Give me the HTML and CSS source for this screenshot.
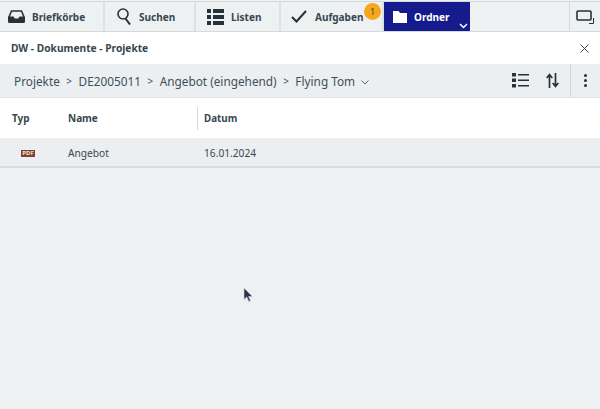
FILE: index.html
```html
<!doctype html>
<html lang="en">
<head>
  <meta charset="utf-8">
  <title>DW - Dokumente - Projekte</title>
  <link rel="stylesheet" href="styles.css">
</head>
<body>
  <!-- TOP TOOLBAR -->
  <nav class="toolbar">
    <div class="tab tab-briefkoerbe">
      <svg class="icon" width="17" height="13" viewBox="0 0 17 13"><path d="M1 7L3.500 1H13.500L16 7" fill="none" stroke="#263238" stroke-width="1.600"/><path d="M0 6.500H5.500L6.800 8.500H10.200L11.500 6.500H17V11.500Q17 13 15.500 13H1.500Q0 13 0 11.500Z" fill="#263238"/></svg>
      <span>Briefkörbe</span>
    </div>
    <div class="tab tab-suchen">
      <svg class="icon" width="14" height="17" viewBox="0 0 14 17"><circle cx="6" cy="6" r="5" fill="none" stroke="#263238" stroke-width="1.600"/><path d="M8.500 10.500L13 16.500" stroke="#263238" stroke-width="2"/></svg>
      <span>Suchen</span>
    </div>
    <div class="tab tab-listen">
      <svg class="icon" width="17" height="16" viewBox="0 0 17 16" fill="#263238"><rect width="4" height="4"/><rect x="6" width="11" height="4"/><rect y="6" width="4" height="4"/><rect x="6" y="6" width="11" height="4"/><rect y="12" width="4" height="4"/><rect x="6" y="12" width="11" height="4"/></svg>
      <span>Listen</span>
    </div>
    <div class="tab tab-aufgaben">
      <svg class="icon" width="16" height="13" viewBox="0 0 16 13"><path d="M1 7L5.500 11.500L15 1" fill="none" stroke="#263238" stroke-width="2"/></svg>
      <span>Aufgaben</span>
      <b class="badge">1</b>
    </div>
    <div class="tab tab-ordner">
      <svg class="icon" width="14" height="12" viewBox="0 0 14 12"><path d="M0 0H5.500L7 2H14V12H0Z" fill="#fff"/></svg>
      <span>Ordner</span>
      <svg class="tab-caret" width="9" height="6" viewBox="0 0 9 6"><path d="M1 1L4.500 4.500L8 1" fill="none" stroke="#fff" stroke-width="1.500"/></svg>
    </div>
    <div class="toolbar-fill"></div>
    <div class="tab tab-window">
      <svg width="18" height="14" viewBox="0 0 18 14" fill="none" stroke="#263238"><rect x="1" y="1" width="14" height="9" rx="1" stroke-width="1.600"/><path d="M17.500 8V13.500H13" stroke-width="1"/></svg>
    </div>
  </nav>

  <!-- TITLE -->
  <header class="title-bar">
    <h1>DW - Dokumente - Projekte</h1>
    <svg width="9" height="9" viewBox="0 0 9 9"><path d="M.5 .5L8.500 8.500M8.500 .5L.5 8.500" stroke="#37474f" stroke-width="1"/></svg>
  </header>

  <!-- BREADCRUMB -->
  <div class="crumb-bar">
    <div class="crumbs">
      <span>Projekte</span><i>&gt;</i>
      <span>DE2005011</span><i>&gt;</i>
      <span>Angebot (eingehend)</span><i>&gt;</i>
      <span>Flying Tom</span>
      <svg width="8" height="5" viewBox="0 0 8 5"><path d="M.5 .5L4 4L7.500 .5" fill="none" stroke="#546e7a" stroke-width="1"/></svg>
    </div>
    <svg class="crumb-list" width="17" height="15" viewBox="0 0 17 15" fill="#263238"><rect y="0" width="4" height="3.500"/><rect x="6" y="1" width="11" height="1.500"/><rect y="5.500" width="4" height="3.500"/><rect x="6" y="6.500" width="11" height="1.500"/><rect y="11" width="4" height="3.500"/><rect x="6" y="12" width="11" height="1.500"/></svg>
    <svg class="crumb-sort" width="13" height="15" viewBox="0 0 13 15" fill="none" stroke="#263238" stroke-width="1.700"><path d="M3.500 15V2M.7 5L3.500 1.500L6.300 5M9.500 0V13M6.700 10L9.500 13.500L12.300 10"/></svg>
    <div class="crumb-more"><b></b><b></b><b></b></div>
  </div>

  <!-- TABLE -->
  <div class="list-head">
    <div class="col-typ">Typ</div>
    <div class="col-name">Name</div>
    <div class="col-datum">Datum</div>
  </div>
  <div class="list-row">
    <div class="col-typ"><span class="pdf">PDF</span></div>
    <div class="col-name">Angebot</div>
    <div class="col-datum">16.01.2024</div>
  </div>

  <!-- mouse pointer in the screenshot -->
  <svg class="cursor" width="11" height="16" viewBox="0 0 11 16"><path d="M1 1V12.500L3.700 10L5.800 14.500L7.500 13.700L5.600 9.500H9.500Z" fill="#37324a" stroke="#cfd3d6" stroke-width=".6"/></svg>
</body>
</html>
```

FILE: styles.css
```css
/* Basic reset */
html, body {
  margin: 0;
  padding: 0;
}

body {
  width: 600px;
  height: 409px;
  overflow: hidden;
  position: relative;
  background: #eef1f2;
  color: #37474f;
  font-family: "Noto Sans", sans-serif;
  font-size: 10px;
}

/* Toolbar */
.toolbar {
  display: flex;
  height: 29px;
  margin-top: 1px;
  border-top: 1px solid #d5d9db;
  border-bottom: 1px solid #d5d9db;
  background: #eef1f2;
}

.tab {
  display: flex;
  align-items: center;
  position: relative;
  box-sizing: border-box;
  border-right: 2px solid #dde1e3;
  font-weight: 700;
  color: #37474f;
}

.tab-briefkoerbe { width: 105px; padding-left: 8px; gap: 7px; }
.tab-suchen { width: 91px; padding-left: 12px; gap: 8px; }
.tab-listen { width: 85px; padding-left: 11px; gap: 7px; }
.tab-aufgaben { width: 103px; padding-left: 10px; gap: 8px; }

.tab-ordner {
  width: 86px;
  padding-left: 9px;
  gap: 7px;
  background: #151b8d;
  color: #fff;
  border-right: 0;
}

.tab-caret {
  position: absolute;
  right: 2px;
  bottom: 2px;
}

.toolbar-fill {
  flex: 1;
}

.tab-window {
  width: 31px;
  padding-left: 6px;
  border-right: 0;
  border-left: 1px solid #d5d9db;
}

.badge {
  position: absolute;
  top: 1px;
  right: 1px;
  width: 17px;
  height: 17px;
  border-radius: 50%;
  background: #f5a81c;
  color: #5d4312;
  font-size: 9px;
  font-weight: 400;
  line-height: 17px;
  text-align: center;
}

/* Title bar */
.title-bar {
  display: flex;
  align-items: center;
  justify-content: space-between;
  height: 32px;
  padding: 0 11px;
  background: #fff;
}

.title-bar h1 {
  margin: 0;
  font-size: 10.200px;
  font-weight: 700;
}

/* Breadcrumb bar */
.crumb-bar {
  display: flex;
  align-items: center;
  height: 33px;
  border-bottom: 1px solid #dfe3e5;
  background: #eceff1;
}

.crumbs {
  display: flex;
  align-items: center;
  flex: 1;
  padding-left: 14px;
  font-size: 11.800px;
  color: #3f4f58;
}

.crumbs i {
  margin: 0 6.500px;
  font-style: normal;
  font-size: 10px;
}

.crumbs svg {
  margin: 3px 0 0 6px;
}

.crumb-list {
  margin-right: 17px;
}

.crumb-sort {
  margin-right: 11px;
}

.crumb-more {
  display: flex;
  flex-direction: column;
  align-items: center;
  justify-content: center;
  gap: 2px;
  width: 30px;
  height: 33px;
  border-left: 1px solid #d5d9db;
  box-sizing: border-box;
}

.crumb-more b {
  width: 3px;
  height: 3px;
  border-radius: 50%;
  background: #263238;
}

/* Document list */
.list-head,
.list-row {
  display: grid;
  grid-template-columns: 68px 129px 1fr;
  align-items: center;
}

.list-head {
  height: 40px;
  background: #fff;
  font-weight: 700;
}

.list-row {
  height: 30px;
  padding-top: 2px;
  box-sizing: border-box;
  border-bottom: 2px solid #d8dcde;
  background: #eceff1;
  font-size: 10.200px;
}

.col-typ {
  padding-left: 12px;
}

.col-datum {
  padding-left: 6px;
}

.list-head .col-datum {
  height: 23px;
  line-height: 23px;
  border-left: 1px solid #d5d9db;
  font-size: 9.800px;
}

.list-row .col-datum {
  padding-left: 7px;
}

.pdf {
  display: block;
  width: 14px;
  height: 7px;
  margin-left: 9px;
  background: #7f4030;
  color: #f2e2d0;
  font-size: 6px;
  font-weight: 700;
  line-height: 7px;
  text-align: center;
  overflow: hidden;
}

.cursor {
  position: absolute;
  left: 243px;
  top: 287px;
}
```
